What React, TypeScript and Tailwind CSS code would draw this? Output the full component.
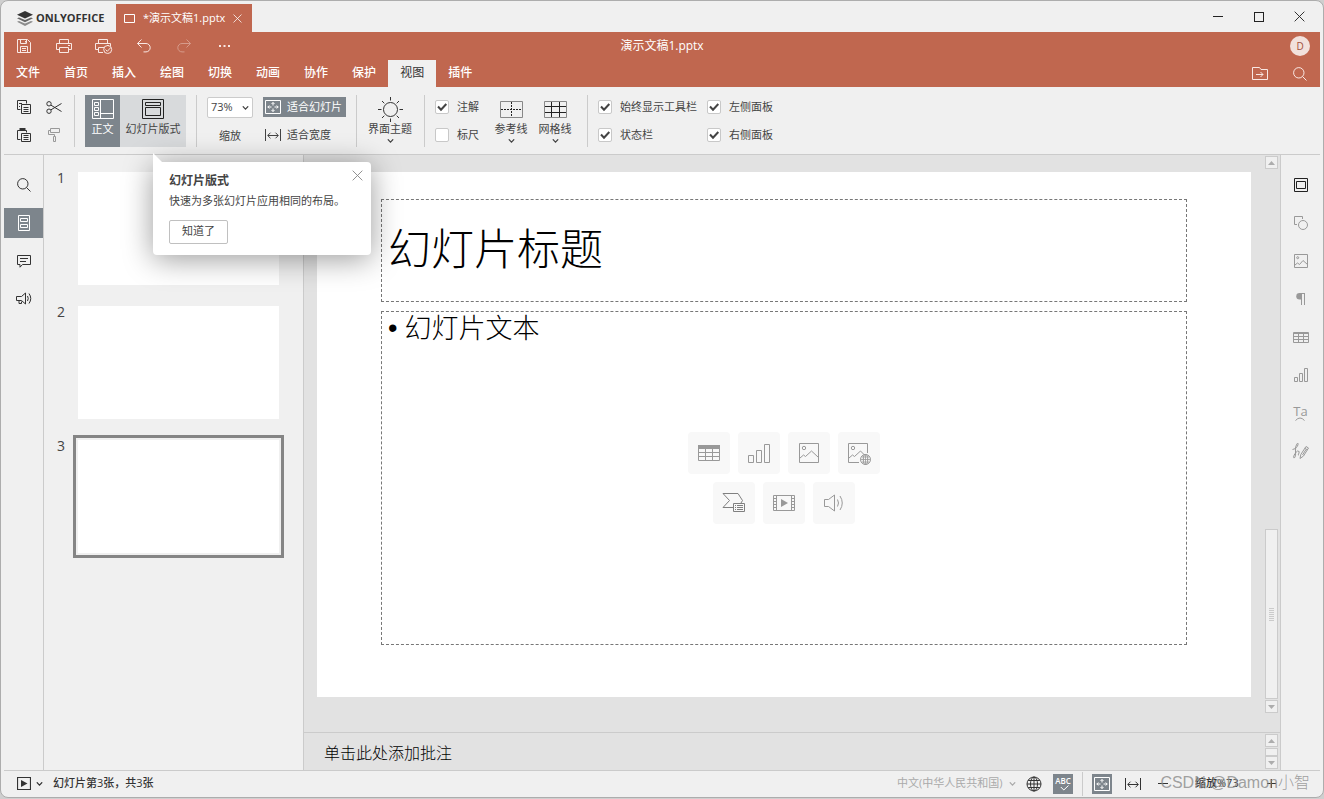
import { useState, type ReactNode } from "react";

const TABS = ["文件", "首页", "插入", "绘图", "切换", "动画", "协作", "保护", "视图", "插件"];

const Icon = ({
  w,
  h,
  className = "",
  children,
}: {
  w: number;
  h: number;
  className?: string;
  children: ReactNode;
}) => (
  <svg
    width={w}
    height={h}
    viewBox={`0 0 ${w} ${h}`}
    fill="none"
    stroke="currentColor"
    className={`shrink-0 ${className}`}
    aria-hidden="true"
  >
    {children}
  </svg>
);

/* ================== ICONS ================== */
const Logo = () => (
  <svg width="16" height="15" viewBox="0 0 16 15" className="shrink-0" aria-hidden="true">
    <path d="M0 10.8l2-.9 6 2.6 6-2.6 2 .9L8 15z" fill="#8c8c8c" />
    <path d="M0 7.3l2-.9L8 9l6-2.6 2 .9-8 3.9z" fill="#666" />
    <path d="M8 0l8 3.7-8 3.8L0 3.7z" fill="#333" />
  </svg>
);

const Save = () => (
  <Icon w={14} h={14}>
    <path d="M.5 .5h10l3 3v10H.5zM3.5 .5v4h6v-4M3.5 13.5v-6h7v6M5 9.5h4M5 11.5h4M8.5 2v1.5" />
  </Icon>
);

const Printer = () => (
  <Icon w={16} h={14}>
    <path d="M3.5 4V.5h9V4M3.5 10.5h-3v-6h15v6h-3M3.5 8.5h9v5h-9zM12 6.5h2" />
  </Icon>
);

const QuickPrint = () => (
  <Icon w={18} h={16}>
    <path d="M3.5 5V1.5h9V5M3.5 11.5h-3v-6h15V8M8 14.5H3.5v-5H9M12 7.5h2" />
    <circle cx="12.7" cy="11.5" r="4" />
    <path d="M10.5 11.5l1.8 1.8 3.7-4" />
  </Icon>
);

const Undo = ({ className = "" }) => (
  <Icon w={14} h={14} className={className}>
    <path d="M4.5 .5l-4 4 4 4M.5 4.5H9a4.2 4.2 0 0 1 0 8.4H6.5" />
  </Icon>
);

const Search = () => (
  <Icon w={14} h={14}>
    <circle cx="5.8" cy="5.8" r="5.2" />
    <path d="M9.5 9.5l4 4" />
  </Icon>
);

const Cross = ({ size }: { size: number }) => (
  <svg width={size} height={size} viewBox="0 0 12 12" fill="none" stroke="currentColor" aria-hidden="true">
    <path d="M.7 .7l10.6 10.6M11.3 .7L.7 11.3" />
  </svg>
);

const Chevron = () => (
  <Icon w={7} h={4}>
    <path d="M.8 .3l2.7 2.8L6.2 .3" strokeWidth="1.2" />
  </Icon>
);

const FitSlide = () => (
  <Icon w={16} h={16}>
    <path d="M.5 1.5h15v13H.5zM8 6.5v-3M8 9.5v3M6.5 8H2.8M9.5 8h3.7" />
    <path d="M6.5 5L8 3.5 9.5 5M6.5 11L8 12.5 9.5 11M4.3 6.5L2.8 8l1.5 1.5M11.7 6.5L13.2 8l-1.5 1.5" />
  </Icon>
);

const FitWidth = () => (
  <Icon w={16} h={12}>
    <path d="M.5 0v12M15.5 0v12M3 6.5h10M5.5 3.7L2.7 6.5l2.8 2.8M10.5 3.7l2.8 2.8-2.8 2.8" />
  </Icon>
);

const Copy = () => (
  <Icon w={14} h={14}>
    <path d="M3.5 9.5h-3v-9h9v3M2 3.5h3M2 6.5h1M4.5 4.5h9v9h-9zM6.5 7.5h5M6.5 9.5h5M6.5 11.5h5" />
  </Icon>
);

const Paste = () => (
  <Icon w={14} h={14}>
    <path d="M3.5 11.5h-3v-9h9v2M4.5 5.5h9v8h-9zM6.5 7.5h5M6.5 9.5h5M6.5 11.5h5" />
    <path d="M2.5 1.5h6" strokeWidth="3" />
  </Icon>
);

const Cut = () => (
  <Icon w={16} h={13}>
    <circle cx="3" cy="2.8" r="2.2" />
    <circle cx="3" cy="10.2" r="2.2" />
    <path d="M5 4.2l10.5 6.3M5 8.8l10.5-6.3" />
  </Icon>
);

const Brush = () => (
  <Icon w={12} h={14} className="text-[#999]">
    <path d="M2.5 .5h9v4h-9zM2.5 2.5h-2v4h6v2M5.5 8.5h2v5h-2z" />
  </Icon>
);

const Table = () => (
  <Icon w={22} h={16}>
    <path d="M0 2h22" strokeWidth="4" />
    <path d="M.5 1v14.5h21V1M0 7.5h22M0 11.5h22M7.5 4v12M14.5 4v12" />
  </Icon>
);

const Chart = () => (
  <Icon w={22} h={19}>
    <path d="M.5 11.5h5v7h-5zM8.5 6.5h5v12h-5zM16.5 .5h5v18h-5z" />
  </Icon>
);

const Picture = () => (
  <Icon w={20} h={20}>
    <path d="M.5 .5h19v19H.5zM1 15l3.5-3 2 1.5L12.5 8l6.5 6" />
    <circle cx="5" cy="5" r="1.7" />
  </Icon>
);

const WebPicture = () => (
  <Icon w={24} h={24}>
    <path d="M12 21.5H1.5v-19h19V12M2 17l3.5-3 2 1.5L13.500 10l4 4" />
    <circle cx="6" cy="7" r="1.7" />
    <circle cx="18.5" cy="18.5" r="5" />
    <ellipse cx="18.5" cy="18.5" rx="2.2" ry="5" />
    <path d="M13.5 18.5h10M18.5 13.5v10M14.5 16h8M14.5 21h8" strokeWidth=".8" />
  </Icon>
);

const SmartArt = () => (
  <Icon w={24} h={20} className="text-[#808080]">
    <path d="M11 14.5H1l6.5-7L1 .5h15l4.5 7-1.5 2.5" />
    <path d="M11.5 10.5h11v8h-11zM13 12.5h1M13 14.5h1M13 16.5h1M15 12.5h6M15 14.5h6M15 16.5h6" />
  </Icon>
);

const Video = () => (
  <Icon w={22} h={16}>
    <path d="M.5 .5h21v15H.5zM3.5 .5v15M18.5 .5v15M0 3.5h3M0 6.5h3M0 9.5h3M0 12.5h3M19 3.5h3M19 6.5h3M19 9.5h3M19 12.5h3" />
    <path d="M8 4l7 4-7 4z" fill="currentColor" stroke="none" />
  </Icon>
);

const Sound = () => (
  <Icon w={20} h={18}>
    <path d="M.5 5.5h4l6-4.5v16l-6-4.5h-4zM13.5 5.5q2 3.500 0 7M16 2q4.500 7 0 14" />
  </Icon>
);

const Globe = () => (
  <Icon w={16} h={16}>
    <circle cx="8" cy="8" r="7" />
    <ellipse cx="8" cy="8" rx="3.5" ry="7" />
    <path d="M8 1v14M1 8h14M2.2 4.5h11.6M2.2 11.5h11.6" />
  </Icon>
);

const Spelling = () => (
  <span className="flex flex-col items-center">
    <span className="h-2 font-['Open_Sans'] text-[8px] leading-2 font-semibold">ABC</span>
    <Icon w={9} h={6} className="ml-1">
      <path d="M.8 2l3 3L8.5 .5" />
    </Icon>
  </span>
);

/* ================== PARTS ================== */
const Separator = () => <div className="w-px self-stretch bg-[#cbcbcb]" />;

const Check = ({ label, checked = false }: { label: string; checked?: boolean }) => (
  <label className="flex h-5 items-center gap-2 whitespace-nowrap">
    <span className="grid">
      <input
        type="checkbox"
        defaultChecked={checked}
        className="peer col-start-1 row-start-1 size-3.5 appearance-none rounded-xs border border-[#c8c8c8] bg-white"
      />
      <svg
        viewBox="0 0 14 14"
        className="pointer-events-none invisible col-start-1 row-start-1 size-3.5 peer-checked:visible"
        fill="none"
        stroke="#444"
        strokeWidth="2"
      >
        <path d="M3 6.5l3 3.2L11.3 4" />
      </svg>
    </span>
    {label}
  </label>
);

const MenuButton = ({ label, icon }: { label: string; icon: ReactNode }) => (
  <button className="flex w-11 flex-col items-center whitespace-nowrap">
    <span className="flex h-7 items-center">{icon}</span>
    <span className="h-4 leading-3">{label}</span>
    <Chevron />
  </button>
);

const ScrollButton = ({ up = false }: { up?: boolean }) => (
  <button
    aria-label={up ? "向上滚动" : "向下滚动"}
    className="flex size-[13px] shrink-0 items-center justify-center border border-[#cbcbcb] bg-[#f0f0f0]"
  >
    <svg width="7" height="4" viewBox="0 0 7 4" fill="#adadad">
      <path d={up ? "M0 4h7L3.5 0z" : "M0 0h7L3.5 4z"} />
    </svg>
  </button>
);

const TitleBar = () => (
  <header className="flex h-[31px] items-end">
    <div className="flex h-7 w-28 items-center gap-[3px] pl-[13px] text-[#333]">
      <Logo />
      <span className="font-['Open_Sans'] text-[11px] font-bold">ONLYOFFICE</span>
    </div>
    <div className="flex h-7 w-[136px] items-center bg-[#c0674f] pl-2 text-[11px] text-white">
      <Icon w={11} h={9}>
        <path d="M.5 .5h10v8H.5z" />
      </Icon>
      <span className="ml-2 flex-1 whitespace-nowrap">*演示文稿1.pptx</span>
      <button aria-label="关闭标签" className="mr-2.5">
        <Cross size={9} />
      </button>
    </div>
    <div className="ml-auto flex h-full text-[#222]">
      <button aria-label="最小化" className="flex w-[41px] items-center justify-center">
        <span className="h-px w-2.5 bg-current" />
      </button>
      <button aria-label="最大化" className="flex w-[41px] items-center justify-center">
        <span className="size-2.5 border border-current" />
      </button>
      <button aria-label="关闭" className="flex w-[41px] items-center justify-center">
        <Cross size={11} />
      </button>
    </div>
  </header>
);

const QUICK = [
  { label: "保存", icon: <Save /> },
  { label: "打印", icon: <Printer /> },
  { label: "快速打印", icon: <QuickPrint /> },
  { label: "撤消", icon: <Undo /> },
  { label: "重做", icon: <Undo className="-scale-x-100 opacity-40" /> },
  {
    label: "更多",
    icon: (
      <Icon w={11} h={2}>
        <path d="M0 1h2M4.5 1h2M9 1h2" strokeWidth="2" />
      </Icon>
    ),
  },
];

const RedBar = () => {
  const [tab, setTab] = useState("视图");

  return (
    <div className="bg-[#c0674f] text-white">
      <div className="flex h-7 items-center">
        <div className="flex flex-1 text-[#f9e8e4]">
          {QUICK.map((q) => (
            <button key={q.label} aria-label={q.label} className="flex h-7 w-10 items-center justify-center">
              {q.icon}
            </button>
          ))}
        </div>
        <div className="text-xs">演示文稿1.pptx</div>
        <div className="flex flex-1 justify-end">
          <div className="mr-2.5 flex size-5 items-center justify-center rounded-full bg-[#f2e1dc] font-['Open_Sans'] text-[10px] text-[#a2503b]">
            D
          </div>
        </div>
      </div>
      <div className="flex h-[27px]">
        {TABS.map((t) => (
          <button
            key={t}
            onClick={() => setTab(t)}
            className={
              t === tab
                ? "bg-[#f0f0f0] px-3 pb-0.5 text-xs text-[#333]"
                : "px-3 pb-0.5 text-xs font-medium text-white"
            }
          >
            {t}
          </button>
        ))}
        <div className="ml-auto flex text-[#f9e8e4]">
          <button aria-label="打开文件位置" className="flex w-10 items-center justify-center">
            <Icon w={16} h={13}>
              <path d="M.5 .5h7l1.5 2h6.5v10H.5zM4 7.5h7M8.5 5l2.5 2.5L8.5 10" />
            </Icon>
          </button>
          <button aria-label="查找" className="flex w-10 items-center justify-center">
            <Search />
          </button>
        </div>
      </div>
    </div>
  );
};

const Toolbar = () => (
  <div className="flex h-[68px] border-b border-[#cbcbcb] pt-2 pb-[7px] text-[11px] text-[#444]">
    <div className="grid w-[70px] grid-cols-[30px_30px] grid-rows-[24px_32px] place-items-center pl-[5px] text-[#333]">
      <button aria-label="复制">
        <Copy />
      </button>
      <button aria-label="剪切">
        <Cut />
      </button>
      <button aria-label="粘贴">
        <Paste />
      </button>
      <button aria-label="复制样式">
        <Brush />
      </button>
    </div>
    <Separator />
    <div className="mx-2.5 flex">
      <button className="flex w-[35px] flex-col items-center bg-[#7d858c] text-white">
        <span className="flex h-7 items-center">
          <Icon w={22} h={20}>
            <path d="M.5 .5h21v19H.5zM8.5 .5v19M8.5 14.5h13M2.5 3.5h4v3h-4zM2.5 8.5h4v3h-4zM2.5 13.5h4v3h-4z" />
          </Icon>
        </span>
        <span className="leading-3">正文</span>
      </button>
      <button className="flex w-[66px] flex-col items-center bg-[#d8dadc] whitespace-nowrap">
        <span className="flex h-7 items-center text-[#222]">
          <Icon w={22} h={20}>
            <path d="M.5 .5h21v19H.5zM3.5 3.5h15v3h-15zM3.5 8.5h15v8h-15z" />
          </Icon>
        </span>
        <span className="leading-3">幻灯片版式</span>
      </button>
    </div>
    <Separator />
    <div className="mx-2.5 flex flex-col gap-2 pt-0.5">
      <div className="grid w-[46px] items-center">
        <select
          aria-label="缩放比例"
          className="col-start-1 row-start-1 h-[21px] appearance-none rounded-xs border border-[#cbcbcb] bg-white pl-[3px] font-['Open_Sans']"
        >
          <option>73%</option>
        </select>
        <span className="pointer-events-none col-start-1 row-start-1 mr-1 justify-self-end">
          <Chevron />
        </span>
      </div>
      <span className="text-center leading-5">缩放</span>
    </div>
    <div className="mr-2.5 flex flex-col gap-2 pt-0.5 whitespace-nowrap">
      <button className="flex h-5 w-[83px] items-center gap-1.5 bg-[#7d858c] pl-0.5 text-white">
        <FitSlide />
        适合幻灯片
      </button>
      <button className="flex h-5 items-center gap-1.5 pl-0.5">
        <FitWidth />
        适合宽度
      </button>
    </div>
    <Separator />
    <div className="mr-3 ml-[11px] flex">
      <MenuButton
        label="界面主题"
        icon={
          <Icon w={25} h={25} className="text-[#333]">
            <circle cx="12.5" cy="12.5" r="7" />
            <path d="M12.5 0v3.5M12.5 21.5V25M0 12.5h3.5M21.5 12.5H25M4 4l2.3 2.3M18.7 18.7L21 21M4 21l2.3-2.3M18.7 6.3L21 4" />
          </Icon>
        }
      />
    </div>
    <Separator />
    <div className="ml-2.5 flex flex-col gap-2 pt-0.5">
      <Check label="注解" checked />
      <Check label="标尺" />
    </div>
    <div className="mx-2.5 flex">
      <MenuButton
        label="参考线"
        icon={
          <Icon w={23} h={17}>
            <path d="M.5 .5h22v16H.5z" stroke="#888" />
            <path d="M1 8.5h21M11.5 1v15" stroke="#222" strokeDasharray="2 1" />
          </Icon>
        }
      />
      <MenuButton
        label="网格线"
        icon={
          <Icon w={23} h={17}>
            <path d="M.5 .5h22v16H.5z" stroke="#888" />
            <path d="M1 5.5h21M1 11.5h21M7.5 1v15M15.5 1v15" stroke="#222" />
          </Icon>
        }
      />
    </div>
    <Separator />
    <div className="ml-2.5 grid grid-cols-[auto_auto] content-start gap-x-2.5 gap-y-2 pt-0.5">
      <Check label="始终显示工具栏" checked />
      <Check label="左侧面板" checked />
      <Check label="状态栏" checked />
      <Check label="右侧面板" checked />
    </div>
  </div>
);

const LEFT = [
  { label: "查找", icon: <Search /> },
  {
    label: "幻灯片",
    icon: (
      <Icon w={12} h={16}>
        <path d="M.5 .5h11v15H.5zM2.5 3.5h7v3h-7zM2.5 9.5h7v3h-7z" />
      </Icon>
    ),
  },
  {
    label: "批注",
    icon: (
      <Icon w={14} h={13}>
        <path d="M.5 .5h13v9h-8l-2.5 2.7V9.5H.5zM3 3.5h8M3 6.5h6" />
      </Icon>
    ),
  },
  {
    label: "反馈",
    icon: (
      <Icon w={16} h={14}>
        <path d="M.5 4.5h5l4-3.5v11l-4-3.5h-5zM3 8.5v3h2.5v-2M11.5 4q1.5 2.5 0 5M13 1.5q3.5 5 0 10" />
      </Icon>
    ),
  },
];

const LeftRail = () => (
  <nav className="flex w-10 shrink-0 flex-col gap-2 border-r border-[#cbcbcb] pt-[15px] text-[#333]">
    {LEFT.map((item, i) => (
      <button
        key={item.label}
        aria-label={item.label}
        className={
          i === 1
            ? "flex h-[30px] items-center justify-center bg-[#7d858c] text-white"
            : "flex h-[30px] items-center justify-center"
        }
      >
        {item.icon}
      </button>
    ))}
  </nav>
);

const RIGHT = [
  {
    label: "幻灯片设置",
    icon: (
      <Icon w={14} h={14}>
        <path d="M.5 .5h13v13H.5zM2.5 3.5h9v7h-9z" />
      </Icon>
    ),
  },
  {
    label: "形状设置",
    icon: (
      <Icon w={14} h={14}>
        <path d="M3 8.5H.5v-8h8V3" />
        <circle cx="9" cy="9" r="4.5" />
      </Icon>
    ),
  },
  {
    label: "图片设置",
    icon: (
      <Icon w={14} h={14}>
        <path d="M.5 .5h13v13H.5zM1 11l2.5-2 2 1.5 3.5-4 4.5 4" />
        <circle cx="3.7" cy="3.7" r="1" />
      </Icon>
    ),
  },
  {
    label: "段落设置",
    icon: (
      <Icon w={10} h={12}>
        <path d="M4 .5h5M5.5 .5V12M8.5 .5V12" />
        <path d="M5 0H3.5a3.2 3.2 0 0 0 0 6.5H5z" fill="currentColor" stroke="none" />
      </Icon>
    ),
  },
  {
    label: "表格设置",
    icon: (
      <Icon w={16} h={11}>
        <path d="M.5 .5h15v10H.5zM0 1.5h16M0 4.5h16M0 7.5h16M5.5 1v10M10.5 1v10" />
      </Icon>
    ),
  },
  {
    label: "图表设置",
    icon: (
      <Icon w={14} h={14}>
        <path d="M.5 9.5h3v4h-3zM5.5 5.5h3v8h-3zM10.5 .5h3v13h-3z" />
      </Icon>
    ),
  },
  {
    label: "艺术字设置",
    icon: (
      <span className="flex flex-col items-center">
        <span className="font-['Open_Sans'] text-[13px] leading-3">Ta</span>
        <Icon w={10} h={4}>
          <path d="M.5 3.5q4.5-5 9 0" />
        </Icon>
      </span>
    ),
  },
  {
    label: "签名设置",
    icon: (
      <Icon w={17} h={17}>
        <path d="M.5 6.5q3 0 5-3.5 1.5-3.5-.3-2.5Q3 3 3.5 8q.5 5-.7 6.5-1.3 1-1.3-.8Q2.5 10 5.5 8q2.5 0 1.5 2-1.5 2.5 0 2.3" />
        <path d="M8 15.5l.8-4L14 3.5 16.5 5l-5 8zM12.8 5.3l2.5 1.5M10.5 12L14 6.5" />
      </Icon>
    ),
  },
];

const RightRail = () => (
  <aside className="flex w-10 shrink-0 flex-col gap-2 border-l border-[#cbcbcb] pt-[15px] text-[#999]">
    {RIGHT.map((item, i) => (
      <button
        key={item.label}
        aria-label={item.label}
        className={
          i === 0
            ? "flex h-[30px] items-center justify-center text-[#222]"
            : "flex h-[30px] items-center justify-center"
        }
      >
        {item.icon}
      </button>
    ))}
  </aside>
);

const Thumbnails = () => (
  <ol className="flex w-[260px] shrink-0 flex-col gap-[11px] border-r border-[#cbcbcb] pt-3">
    {[1, 2, 3].map((n) => (
      <li key={n} className="flex pl-[13px] font-['Open_Sans'] text-sm text-[#444]">
        <span className="w-4 pt-px leading-5">{n}</span>
        <div
          className={
            n === 3
              ? "h-[123px] w-[211px] border-3 border-[#858585] p-0.5"
              : "h-[123px] w-[211px] p-[5px]"
          }
        >
          <div className="h-full bg-white" />
        </div>
      </li>
    ))}
  </ol>
);

const INSERT = [
  [
    { label: "插入表格", icon: <Table /> },
    { label: "插入图表", icon: <Chart /> },
    { label: "插入图片", icon: <Picture /> },
    { label: "网络图片", icon: <WebPicture /> },
  ],
  [
    { label: "插入 SmartArt", icon: <SmartArt /> },
    { label: "插入视频", icon: <Video /> },
    { label: "插入音频", icon: <Sound /> },
  ],
];

const Slide = () => (
  <div className="flex aspect-[934/525] flex-col gap-[9px] bg-white px-16 pt-[27px] pb-[52px] text-black">
    <h1 className="flex h-[103px] items-center border border-dashed border-[#777] px-1.5 pb-1 text-[43px] leading-none font-light">
      幻灯片标题
    </h1>
    <div className="grid flex-1 border border-dashed border-[#777]">
      <ul className="col-start-1 row-start-1 px-1.5 text-[27px] leading-8 font-light">
        <li className="flex gap-[7px]">
          <span className="font-['Liberation_Sans']">•</span>幻灯片文本
        </li>
      </ul>
      <div className="col-start-1 row-start-1 flex flex-col gap-2 self-center justify-self-center text-[#999]">
        {INSERT.map((row, i) => (
          <div key={i} className="flex justify-center gap-2">
            {row.map((b) => (
              <button
                key={b.label}
                aria-label={b.label}
                className="flex size-[42px] items-center justify-center rounded-sm bg-[#f8f8f8]"
              >
                {b.icon}
              </button>
            ))}
          </div>
        ))}
      </div>
    </div>
  </div>
);

const Editor = () => (
  <main className="flex min-w-0 flex-1 flex-col bg-[#e2e2e2]">
    <div className="flex min-h-0 flex-1">
      <div className="flex-1 pt-[17px] pr-3.5 pl-[13px]">
        <Slide />
      </div>
      <div className="mr-0.5 flex w-[13px] flex-col justify-between pt-px pb-[19px]">
        <ScrollButton up />
        <div className="mt-auto mb-px flex h-[170px] flex-col items-center justify-center gap-px border border-[#cbcbcb] bg-[#f0f0f0]">
          {[0, 1, 2, 3, 4, 5, 6].map((i) => (
            <span key={i} className="h-px w-[5px] bg-[#cbcbcb]" />
          ))}
        </div>
        <ScrollButton />
      </div>
    </div>
    <div className="flex h-[38px] border-t border-[#cbcbcb]">
      <p className="flex-1 pt-2 pl-5 text-base font-light text-black">单击此处添加批注</p>
      <div className="mr-0.5 flex w-[13px] flex-col justify-between py-px">
        <ScrollButton up />
        <span className="h-2 border border-[#cbcbcb] bg-[#f0f0f0]" />
        <ScrollButton />
      </div>
    </div>
  </main>
);

const StatusBar = () => (
  <footer className="relative flex h-[27px] items-center border-t border-[#cbcbcb] pb-px text-[11px] whitespace-nowrap text-[#333]">
    <button aria-label="开始放映" className="ml-[13px] flex items-center gap-[5px]">
      <Icon w={14} h={13}>
        <path d="M.5 .5h13v12H.5z" strokeWidth="1.2" />
        <path d="M4 3l6.5 3.5L4 10z" fill="currentColor" stroke="none" />
      </Icon>
      <Chevron />
    </button>
    <span className="ml-2.5 font-medium">幻灯片第3张，共3张</span>
    <div className="ml-auto flex items-center text-[#aaa]">
      <select aria-label="语言" className="w-[108px] appearance-none">
        <option>中文(中华人民共和国)</option>
      </select>
      <span className="ml-1">
        <Chevron />
      </span>
    </div>
    <button aria-label="设置文档语言" className="ml-2.5">
      <Globe />
    </button>
    <button aria-label="拼写检查" className="ml-[11px] flex size-5 items-center justify-center bg-[#7d858c] text-white">
      <Spelling />
    </button>
    <div className="mx-[9px] h-6 w-px bg-[#cbcbcb]" />
    <button aria-label="适合幻灯片" className="flex size-5 items-center justify-center bg-[#7d858c] text-white">
      <FitSlide />
    </button>
    <button aria-label="适合宽度" className="ml-[13px]">
      <FitWidth />
    </button>
    <button aria-label="缩小" className="ml-[17px] flex h-5 w-2.5 items-center">
      <span className="h-px w-full bg-current" />
    </button>
    <span className="ml-[27px] w-12 font-medium">缩放%73</span>
    <button aria-label="放大" className="mr-11 ml-[23px] flex h-5 w-2.5 items-center justify-center">
      <Icon w={9} h={9}>
        <path d="M4.5 0v9M0 4.5h9" />
      </Icon>
    </button>
    <span className="pointer-events-none absolute right-2.5 bottom-0.5 font-['Liberation_Sans','Noto_Sans_CJK_SC',sans-serif] text-base font-light text-[#8a8a8a]/80">
      CSDN @Damon小智
    </span>
  </footer>
);

const Tip = ({ onClose }: { onClose: () => void }) => (
  <div className="absolute top-[7px] left-[149px] w-[218px] rounded-sm rounded-tl-none bg-white px-4 pt-[9px] pb-[11px] text-[11px] text-[#444] shadow-[0_4px_30px_rgba(0,0,0,0.4)]">
    <svg width="10" height="10" viewBox="0 0 10 10" className="absolute -top-[9px] left-0" fill="#fff">
      <path d="M0 0v10h10z" />
    </svg>
    <button aria-label="关闭提示" onClick={onClose} className="absolute top-2 right-2 text-[#888]">
      <Cross size={11} />
    </button>
    <h2 className="text-xs leading-5 font-bold">幻灯片版式</h2>
    <p className="leading-5">快速为多张幻灯片应用相同的布局。</p>
    <button
      onClick={onClose}
      className="mt-[9px] block h-6 w-[59px] rounded-xs border border-[#c0c0c0] bg-white pb-px"
    >
      知道了
    </button>
  </div>
);

export default function App() {
  const [tip, setTip] = useState(true);

  return (
    <div className="h-screen bg-[#cfcfcf] pb-px font-['Open_Sans','Noto_Sans_CJK_SC',sans-serif]">
      <div className="flex h-full flex-col overflow-hidden rounded-lg border border-[#adadad] bg-[#f0f0f0] px-[3px]">
        <TitleBar />
        <RedBar />
        <Toolbar />
        <div className="relative flex min-h-0 flex-1">
          <LeftRail />
          <Thumbnails />
          <Editor />
          <RightRail />
          {tip && <Tip onClose={() => setTip(false)} />}
        </div>
        <StatusBar />
      </div>
    </div>
  );
}
